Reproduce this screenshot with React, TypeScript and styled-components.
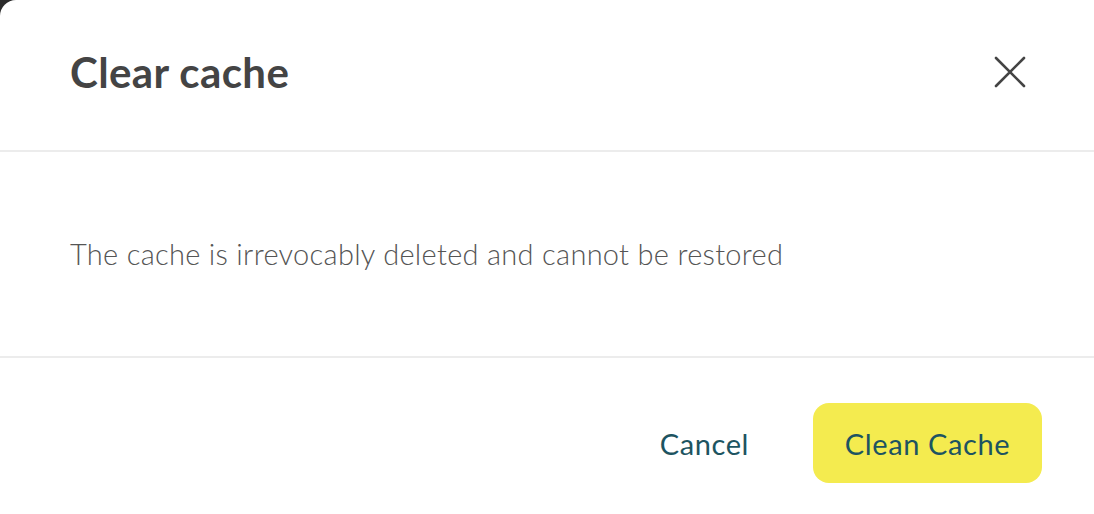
import * as React from 'react'
import styled, { createGlobalStyle } from 'styled-components'

const GlobalStyle = createGlobalStyle`
    *, *::after, *::before {
        box-sizing: border-box;
    }
    html, body {
        margin: 0;
        padding: 0;
        background: #2b2b2b;
    }
    body {
        font-family: Lato, "Noto Sans", Arial, sans-serif;
        -webkit-font-smoothing: antialiased;
    }
`

const App: React.FC = () => (
    <>
        <GlobalStyle />
        <Dialog>
            <Header>
                <Title>Clear cache</Title>
                <CloseButton aria-label="Close">
                    <svg width="32" height="32" viewBox="0 0 32 32" fill="none">
                        <path d="M2 2L30 30M30 2L2 30" stroke="#444" strokeWidth="2.6" strokeLinecap="round" />
                    </svg>
                </CloseButton>
            </Header>
            <Body>
                <Message>The cache is irrevocably deleted and cannot be restored</Message>
            </Body>
            <Footer>
                <TextButton>Cancel</TextButton>
                <PrimaryButton>Clean Cache</PrimaryButton>
            </Footer>
        </Dialog>
    </>
)

const Dialog = styled.div`
    width: 1094px;
    height: 514px;
    background: #fff;
    border-top-left-radius: 16px;
    display: flex;
    flex-direction: column;
    overflow: hidden;
`

const Header = styled.div`
    height: 152px;
    display: flex;
    align-items: center;
    justify-content: space-between;
    padding: 0 68px 6px 70px;
    border-bottom: 2px solid #ececec;
`

const Title = styled.h1`
    margin: 0;
    font-size: 42px;
    font-weight: 700;
    color: #444;
    letter-spacing: 0.4px;
`

const CloseButton = styled.button`
    width: 32px;
    height: 32px;
    padding: 0;
    border: 0;
    background: none;
    display: flex;
    align-items: center;
    justify-content: center;
    cursor: pointer;
`

const Body = styled.div`
    height: 206px;
    display: flex;
    align-items: center;
    padding: 0 70px 2px;
    border-bottom: 2px solid #ececec;
`

const Message = styled.p`
    margin: 0;
    font-size: 29px;
    font-weight: 300;
    color: #555;
    letter-spacing: 0.3px;
`

const Footer = styled.div`
    flex: 1;
    display: flex;
    align-items: center;
    justify-content: flex-end;
    gap: 64px;
    padding: 14px 52px 0 0;
`

const TextButton = styled.button`
    border: 0;
    background: none;
    padding: 0;
    font-family: inherit;
    font-size: 29px;
    font-weight: 400;
    letter-spacing: 0.6px;
    color: #1d5461;
    cursor: pointer;
`

const PrimaryButton = styled.button`
    width: 229px;
    height: 80px;
    border: 0;
    border-radius: 16px;
    background: #f4eb4f;
    font-family: inherit;
    font-size: 29px;
    font-weight: 400;
    letter-spacing: 0.6px;
    color: #1d5461;
    cursor: pointer;
`

export default App
